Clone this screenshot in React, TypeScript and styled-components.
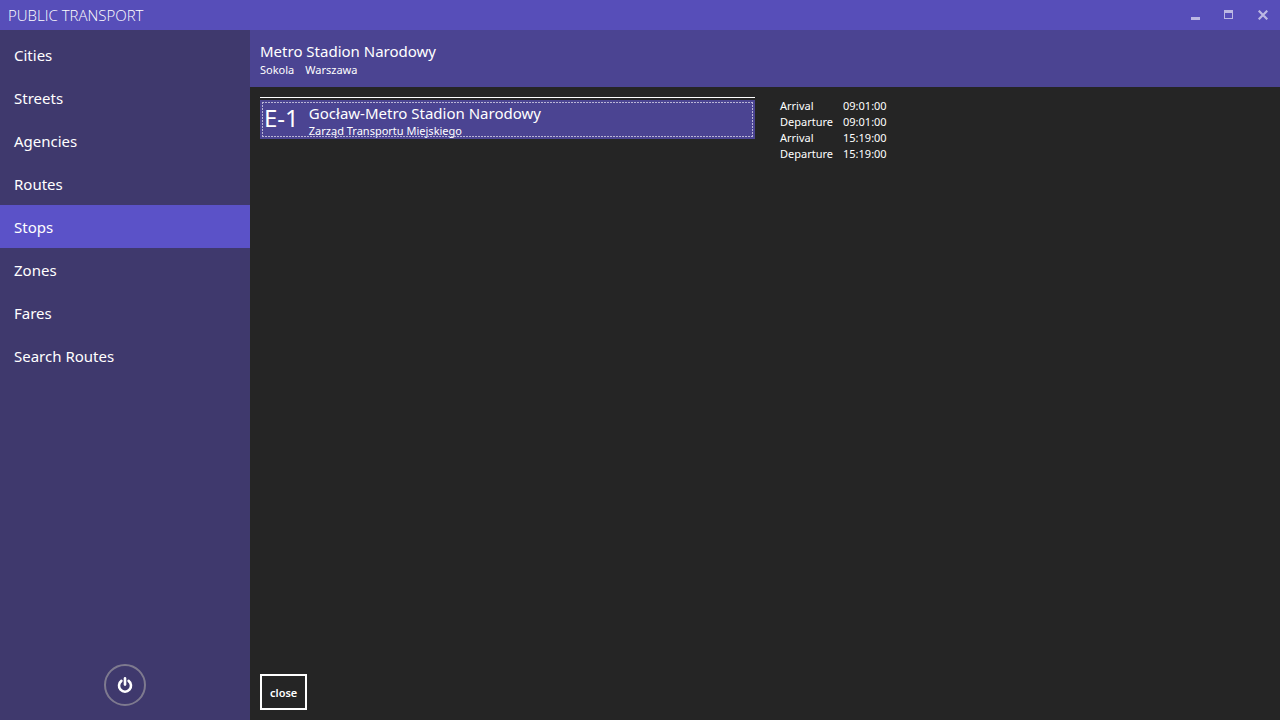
import React, { useState } from "react";
import styled, { createGlobalStyle } from "styled-components";

const GlobalStyle = createGlobalStyle`
  *, *::before, *::after { box-sizing: border-box; }
  body {
    margin: 0;
    background: #252525;
    color: #ffffff;
    font-family: "Noto Sans", "Open Sans", sans-serif;
  }
  button { font: inherit; color: inherit; cursor: pointer; }
`;

const Shell = styled.div`
  display: flex;
  flex-direction: column;
  min-height: 100vh;
`;

const TitleBar = styled.header`
  display: flex;
  align-items: center;
  justify-content: space-between;
  height: 30px;
  padding-left: 8px;
  background: #574eb9;
`;

const AppTitle = styled.span`
  font-family: "Open Sans", sans-serif;
  font-size: 15px;
  font-weight: 300;
  line-height: 20px;
`;

const WindowControls = styled.div`
  display: flex;
`;

const WindowButton = styled.button`
  display: flex;
  align-items: center;
  justify-content: center;
  width: 34px;
  height: 30px;
  padding: 0;
  border: 0;
  background: transparent;
  color: #bcb8e3;
`;

const Body = styled.div`
  display: flex;
  flex: 1;
`;

const Sidebar = styled.aside`
  display: flex;
  flex-direction: column;
  justify-content: space-between;
  width: 250px;
  flex-shrink: 0;
  padding: 3px 0 14px;
  background: #3f396d;
`;

const Nav = styled.nav`
  display: flex;
  flex-direction: column;
`;

const NavItem = styled.button<{ $selected: boolean }>`
  height: 43px;
  padding: 0 14px;
  border: 0;
  background: ${(p) => (p.$selected ? "#5b52c8" : "transparent")};
  font-size: 15px;
  line-height: 20px;
  text-align: left;
`;

const PowerButton = styled.button`
  display: flex;
  align-items: center;
  justify-content: center;
  align-self: center;
  width: 42px;
  height: 42px;
  padding: 0;
  border: 2px solid #7e7a8f;
  border-radius: 50%;
  background: transparent;
`;

const Main = styled.main`
  display: flex;
  flex-direction: column;
  flex: 1;
  min-width: 0;
`;

const StopHeader = styled.section`
  padding: 11px 10px 9px;
  background: #4b4492;
`;

const StopName = styled.h1`
  margin: 0;
  font-size: 15px;
  font-weight: 400;
  line-height: 21px;
`;

const Place = styled.div`
  display: flex;
  gap: 11px;
  font-size: 11px;
  line-height: 16px;
`;

const Columns = styled.div`
  display: grid;
  grid-template-columns: 1fr 1fr;
  gap: 25px;
  flex: 1;
  padding: 10px 5px 0 10px;
  align-items: start;
`;

const RouteList = styled.div`
  padding-top: 2px;
  border-top: 1px solid #ffffff;
`;

const RouteItem = styled.button`
  position: relative;
  display: flex;
  gap: 10px;
  width: 100%;
  height: 39px;
  padding: 0 4px;
  border: 0;
  background: #4b4492;
  text-align: left;
  outline: none;

  /* dashed focus rectangle: two pixels on, one off */
  &::after {
    content: "";
    position: absolute;
    inset: 2px;
    pointer-events: none;
    --across: repeating-linear-gradient(90deg, #b9b5d6 0 2px, transparent 2px 3px);
    --down: repeating-linear-gradient(180deg, #b9b5d6 0 2px, transparent 2px 3px);
    background:
      var(--across) top / 100% 1px no-repeat,
      var(--across) bottom / 100% 1px no-repeat,
      var(--down) left / 1px 100% no-repeat,
      var(--down) right / 1px 100% no-repeat;
  }
`;

const RouteCode = styled.span`
  font-size: 24px;
  line-height: 36px;
`;

const RouteText = styled.span`
  display: flex;
  flex-direction: column;
  padding-top: 3px;
`;

const RouteName = styled.span`
  font-size: 15px;
  line-height: 20px;
`;

const AgencyName = styled.span`
  font-size: 11px;
  line-height: 15px;
`;

const Timetable = styled.table`
  border-collapse: collapse;
  justify-self: start;
  margin-top: 1px;
  font-size: 11px;
  line-height: 16px;

  th, td { padding: 0 10px 0 0; font-weight: 400; text-align: left; }
`;

const Footer = styled.footer`
  padding: 10px;
`;

const CloseButton = styled.button`
  display: block;
  height: 36px;
  padding: 1px 8px 0;
  border: 2px solid #ffffff;
  background: transparent;
  font-size: 11px;
  font-weight: 600;
  line-height: 16px;
`;

const sections = ["Cities", "Streets", "Agencies", "Routes", "Stops", "Zones", "Fares", "Search Routes"];

const times = [
  ["Arrival", "09:01:00"],
  ["Departure", "09:01:00"],
  ["Arrival", "15:19:00"],
  ["Departure", "15:19:00"],
];

export default function App() {
  const [selected, setSelected] = useState("Stops");

  return (
    <Shell>
      <GlobalStyle />
      <TitleBar>
        <AppTitle>PUBLIC TRANSPORT</AppTitle>
        <WindowControls>
          <WindowButton aria-label="Minimize">
            <svg width="10" height="10" fill="currentColor"><path d="M1 7h9v3H1z" /></svg>
          </WindowButton>
          <WindowButton aria-label="Maximize">
            <svg width="10" height="10" fill="currentColor"><path fillRule="evenodd" d="M0 0h9v9H0zM1 3v5h7V3z" /></svg>
          </WindowButton>
          <WindowButton aria-label="Close window">
            <svg width="10" height="10" fill="none" stroke="currentColor" strokeWidth="2.2"><path d="M0.7 0.7l8.6 8.6M9.3 0.7l-8.6 8.6" /></svg>
          </WindowButton>
        </WindowControls>
      </TitleBar>
      <Body>
        <Sidebar>
          <Nav>
            {sections.map((name) => (
              <NavItem key={name} $selected={name === selected} onClick={() => setSelected(name)}>
                {name}
              </NavItem>
            ))}
          </Nav>
          <PowerButton aria-label="Power">
            <svg width="16" height="16" viewBox="0 0 16 16" fill="none" stroke="#ffffff" strokeWidth="2.6">
              <path d="M4.4 3.9a6 6 0 1 0 7.2 0" strokeLinecap="round" />
              <path d="M8 1.4v6.2" strokeLinecap="round" />
            </svg>
          </PowerButton>
        </Sidebar>
        <Main>
          <StopHeader>
            <StopName>Metro Stadion Narodowy</StopName>
            <Place>
              <span>Sokola</span>
              <span>Warszawa</span>
            </Place>
          </StopHeader>
          <Columns>
            <RouteList>
              <RouteItem>
                <RouteCode>E-1</RouteCode>
                <RouteText>
                  <RouteName>Gocław-Metro Stadion Narodowy</RouteName>
                  <AgencyName>Zarząd Transportu Miejskiego</AgencyName>
                </RouteText>
              </RouteItem>
            </RouteList>
            <Timetable>
              <tbody>
                {times.map(([label, time], i) => (
                  <tr key={i}>
                    <th scope="row">{label}</th>
                    <td>{time}</td>
                  </tr>
                ))}
              </tbody>
            </Timetable>
          </Columns>
          <Footer>
            <CloseButton>close</CloseButton>
          </Footer>
        </Main>
      </Body>
    </Shell>
  );
}
